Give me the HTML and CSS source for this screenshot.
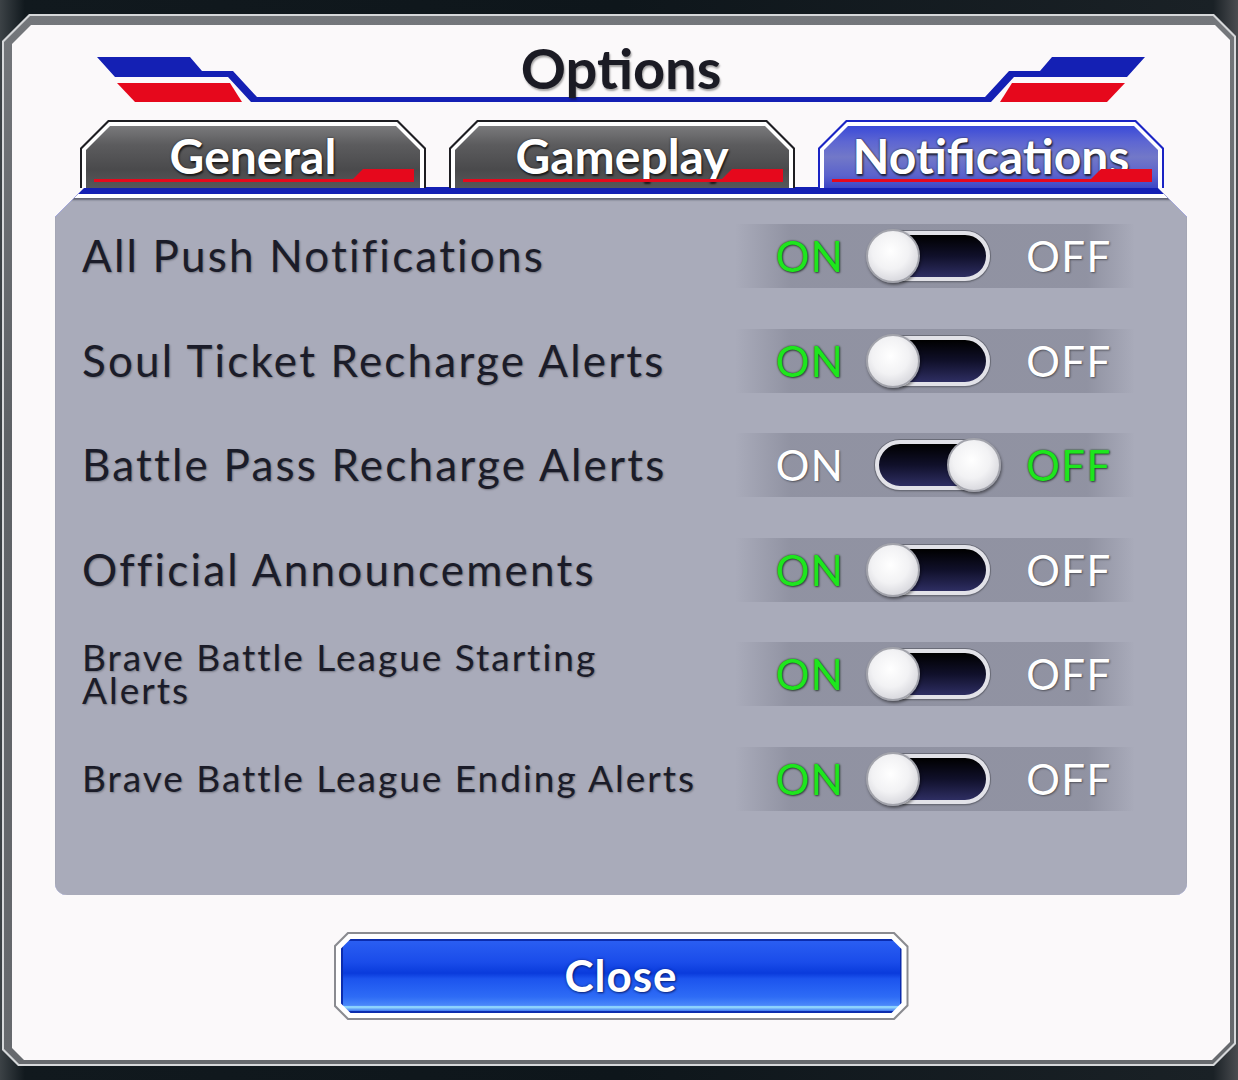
FILE: index.html
```html
<!DOCTYPE html>
<html lang="en">
<head>
  <meta charset="UTF-8" />
  <meta name="viewport" content="width=device-width, initial-scale=1.0" />
  <title>Options</title>
  <link rel="stylesheet" href="styles.css">
</head>
<body>
  <div class="window">
    <div class="frame">
      <div class="panel">

        <header class="title-bar">
          <svg class="title-deco" viewBox="12 25 1218 95" width="1218" height="95" xmlns="http://www.w3.org/2000/svg">
            <polygon fill="#1420b4" points="97,57 190,57 202,71 233,71 257,97 985,97 1009,71 1040,71 1052,57 1145,57 1127,77 1014,77 991,102 251,102 228,77 115,77"/>
            <polygon fill="#e6081c" points="117,83 230,83 242,102 135,102"/>
            <polygon fill="#e6081c" points="1125,83 1012,83 1000,102 1107,102"/>
          </svg>
          <h1>Options</h1>
        </header>

        <nav class="tabs">
          <div class="tab">
            <div class="tab-face">
              <div class="tab-fill">General</div>
            </div>
          </div>
          <div class="tab">
            <div class="tab-face">
              <div class="tab-fill">Gameplay</div>
            </div>
          </div>
          <div class="tab active">
            <div class="tab-face">
              <div class="tab-fill">Notifications</div>
            </div>
          </div>
        </nav>

        <section class="sheet">
          <div class="sheet-edge">
            <div class="sheet-body">

              <div class="row">
                <div class="row-label">All Push Notifications</div>
                <div class="toggle-band">
                  <span class="state lit">ON</span>
                  <span class="switch"><span class="knob"></span></span>
                  <span class="state off">OFF</span>
                </div>
              </div>

              <div class="row">
                <div class="row-label">Soul Ticket Recharge Alerts</div>
                <div class="toggle-band">
                  <span class="state lit">ON</span>
                  <span class="switch"><span class="knob"></span></span>
                  <span class="state off">OFF</span>
                </div>
              </div>

              <div class="row">
                <div class="row-label">Battle Pass Recharge Alerts</div>
                <div class="toggle-band">
                  <span class="state">ON</span>
                  <span class="switch is-off"><span class="knob"></span></span>
                  <span class="state off lit">OFF</span>
                </div>
              </div>

              <div class="row">
                <div class="row-label">Official Announcements</div>
                <div class="toggle-band">
                  <span class="state lit">ON</span>
                  <span class="switch"><span class="knob"></span></span>
                  <span class="state off">OFF</span>
                </div>
              </div>

              <div class="row">
                <div class="row-label small narrow">Brave Battle League Starting Alerts</div>
                <div class="toggle-band">
                  <span class="state lit">ON</span>
                  <span class="switch"><span class="knob"></span></span>
                  <span class="state off">OFF</span>
                </div>
              </div>

              <div class="row">
                <div class="row-label small">Brave Battle League Ending Alerts</div>
                <div class="toggle-band">
                  <span class="state lit">ON</span>
                  <span class="switch"><span class="knob"></span></span>
                  <span class="state off">OFF</span>
                </div>
              </div>

            </div>
          </div>
        </section>

        <div class="close-wrap">
          <button class="close">
            <span class="close-face">
              <span class="close-fill">Close</span>
            </span>
          </button>
        </div>

      </div>
    </div>
  </div>
</body>
</html>
```

FILE: styles.css
```css
:root {
  --ink: #1b1c29;
  --panel: #a9abba;
  --paper: #fbf9fa;
  --royal: #1420b4;
  --red: #e6081c;
  --green: #1ee61e;
}

* {
  box-sizing: border-box;
  margin: 0;
  padding: 0;
}

html, body {
  width: 100%;
  height: 100%;
  overflow: hidden;
}

body {
  font-family: 'Lato', 'Open Sans', sans-serif;
  background: linear-gradient(90deg, #3c4246 0, #11191e 2%, #0e161b 50%, #1a2126 98%, #4a4c50 100%);
  color: var(--ink);
}

/* outer game window frame */
.window {
  margin: 14px 2px 0;
  width: 1234px;
  height: 1052px;
  padding: 2px;
  background: #d6d8da;
  clip-path: polygon(27px 0, calc(100% - 22px) 0, 100% 22px, 100% calc(100% - 22px), calc(100% - 22px) 100%, 16px 100%, 0 calc(100% - 16px), 0 27px);
}

.frame {
  height: 100%;
  padding: 9px 4px 4px 8px;
  background: linear-gradient(180deg, #74777b, #5e6266 40%, #676a6e);
  clip-path: polygon(26px 0, calc(100% - 21px) 0, 100% 21px, 100% calc(100% - 21px), calc(100% - 21px) 100%, 15px 100%, 0 calc(100% - 15px), 0 26px);
}

.panel {
  height: 100%;
  background: var(--paper);
  display: flex;
  flex-direction: column;
  clip-path: polygon(19px 0, calc(100% - 15px) 0, 100% 15px, 100% calc(100% - 18px), calc(100% - 18px) 100%, 12px 100%, 0 calc(100% - 12px), 0 19px);
}

/* title */
.title-bar {
  position: relative;
  height: 95px;
  flex-shrink: 0;
}

.title-deco {
  display: block;
}

.title-bar h1 {
  position: absolute;
  top: 15px;
  left: 0;
  right: 0;
  text-align: center;
  font-size: 56px;
  line-height: 56px;
  font-weight: 700;
  color: #1b1b24;
  text-shadow: 1px 2px 2px rgba(0, 0, 0, 0.35);
}

/* tabs */
.tabs {
  display: flex;
  gap: 23px;
  padding-left: 68px;
  height: 67px;
  flex-shrink: 0;
  position: relative;
  z-index: 1;
}

.tab {
  width: 346px;
  height: 68px;
  padding: 2px 2px 0;
  background: #1e1e22;
  clip-path: polygon(28px 0, calc(100% - 28px) 0, 100% 28px, 100% 100%, 0 100%, 0 28px);
}

.tab-face {
  height: 100%;
  padding: 4px 4px 0;
  background: #fff;
  clip-path: polygon(27px 0, calc(100% - 27px) 0, 100% 27px, 100% 100%, 0 100%, 0 27px);
}

.tab-fill {
  position: relative;
  height: 100%;
  background: linear-gradient(180deg, #7a7a7c 0, #5c5c5e 30%, #4a4a4c 70%, #575759 100%);
  clip-path: polygon(24px 0, calc(100% - 24px) 0, 100% 24px, 100% 100%, 0 100%, 0 24px);
  color: #fff;
  font-size: 48px;
  font-weight: 700;
  line-height: 60px;
  text-align: center;
  text-shadow: 0 0 2px #222, 1px 2px 2px rgba(0, 0, 0, 0.7);
}

.tab-fill::before {
  content: "";
  position: absolute;
  left: 8px;
  right: 60px;
  bottom: 6px;
  height: 3px;
  background: var(--red);
}

.tab-fill::after {
  content: "";
  position: absolute;
  right: 6px;
  bottom: 6px;
  width: 64px;
  height: 13px;
  background: var(--red);
  clip-path: polygon(13px 0, 100% 0, 100% 100%, 0 100%);
}

.tab.active {
  background: #1a24c4;
}

.tab.active .tab-fill {
  background: linear-gradient(180deg, #3a4ad8 0, #5d66d2 25%, #7278c8 50%, #5a62cc 80%, #3c46c6 100%);
}

/* content sheet */
.sheet {
  margin: 0 43px;
  padding-top: 7px;
  background: var(--royal);
  border-radius: 0 0 12px 12px;
  clip-path: polygon(30px 0, calc(100% - 30px) 0, 100% 30px, 100% 100%, 0 100%, 0 30px);
}

.sheet-edge {
  padding-top: 4px;
  background: #fff;
  border-radius: 0 0 12px 12px;
  clip-path: polygon(23px 0, calc(100% - 23px) 0, 100% 23px, 100% 100%, 0 100%, 0 23px);
}

.sheet-body {
  padding: 6px 52px 64px 27px;
  background: var(--panel);
  border-radius: 0 0 12px 12px;
  box-shadow: inset 0 3px 2px -1px rgba(40, 42, 56, 0.55);
  clip-path: polygon(19px 0, calc(100% - 19px) 0, 100% 19px, 100% 100%, 0 100%, 0 19px);
}

.row {
  display: flex;
  align-items: center;
  justify-content: space-between;
  height: 104.5px;
}

.row-label {
  margin-bottom: 2px;
  font-size: 44px;
  line-height: 1.1;
  letter-spacing: 2.2px;
  text-shadow: 1px 1px 2px rgba(0, 0, 0, 0.3);
}

.row-label.small {
  font-size: 37px;
  line-height: 33px;
  letter-spacing: 2px;
}

.row-label.narrow {
  max-width: 560px;
}

.toggle-band {
  display: flex;
  align-items: center;
  width: 400px;
  height: 64px;
  padding-left: 20px;
  background: linear-gradient(90deg, rgba(46, 48, 66, 0) 0, rgba(46, 48, 66, 0.2) 14%, rgba(46, 48, 66, 0.2) 88%, rgba(46, 48, 66, 0) 100%);
}

.state {
  width: 110px;
  text-align: center;
  font-size: 42px;
  letter-spacing: 1.5px;
  color: #fff;
  text-shadow: 1px 1px 2px rgba(0, 0, 0, 0.45);
}

.state.lit {
  color: var(--green);
  text-shadow: 0 0 2px #0b3a0b, 1px 1px 2px rgba(0, 0, 0, 0.5);
}

.state.off {
  margin-left: 24px;
}

.switch {
  position: relative;
  margin-left: 3px;
  width: 122px;
  height: 50px;
  border-radius: 25px;
  border: 4px solid #e2e2e8;
  background: linear-gradient(180deg, #000 0, #10102a 50%, #2e2e62 100%);
  box-shadow: 0 0 0 1px #6a6c78, 0 1px 2px rgba(0, 0, 0, 0.4);
}

.knob {
  position: absolute;
  top: -6px;
  left: -6px;
  width: 54px;
  height: 54px;
  border-radius: 50%;
  border: 2px solid #a2a3ab;
  background: radial-gradient(circle at 45% 40%, #ffffff 0, #f2f2f4 45%, #d4d4da 80%, #bcbcc4 100%);
  box-shadow: 1px 2px 3px rgba(0, 0, 0, 0.45);
}

.switch.is-off {
  margin-left: 10px;
}

.switch.is-off .knob {
  left: 68px;
}

.switch.is-off + .state.off {
  margin-left: 17px;
}

/* close button */
.close-wrap {
  display: flex;
  justify-content: center;
  padding-top: 37px;
}

.close {
  display: block;
  width: 575px;
  height: 88px;
  padding: 2px;
  border: none;
  background: #8a8b90;
  font-family: inherit;
  cursor: pointer;
  clip-path: polygon(14px 0, calc(100% - 14px) 0, 100% 14px, 100% calc(100% - 14px), calc(100% - 14px) 100%, 14px 100%, 0 calc(100% - 14px), 0 14px);
}

.close-face {
  display: block;
  height: 100%;
  padding: 5px;
  background: #fff;
  clip-path: polygon(13px 0, calc(100% - 13px) 0, 100% 13px, 100% calc(100% - 13px), calc(100% - 13px) 100%, 13px 100%, 0 calc(100% - 13px), 0 13px);
}

.close-fill {
  display: block;
  height: 100%;
  border: 2px solid #0b2cae;
  background: linear-gradient(180deg, #2a5ef2 0, #1a4cea 30%, #0a3bdc 46%, #1c54ee 54%, #2e6cf6 80%, #4a88fa 92%, #9ee6ff 94%, #3c74f0 100%);
  clip-path: polygon(10px 0, calc(100% - 10px) 0, 100% 10px, 100% calc(100% - 10px), calc(100% - 10px) 100%, 10px 100%, 0 calc(100% - 10px), 0 10px);
  color: #fff;
  font-size: 44px;
  font-weight: 700;
  line-height: 68px;
  letter-spacing: 1px;
  text-align: center;
  text-shadow: 0 0 3px #0a2a9a, 1px 1px 2px rgba(0, 0, 30, 0.6);
}
```
